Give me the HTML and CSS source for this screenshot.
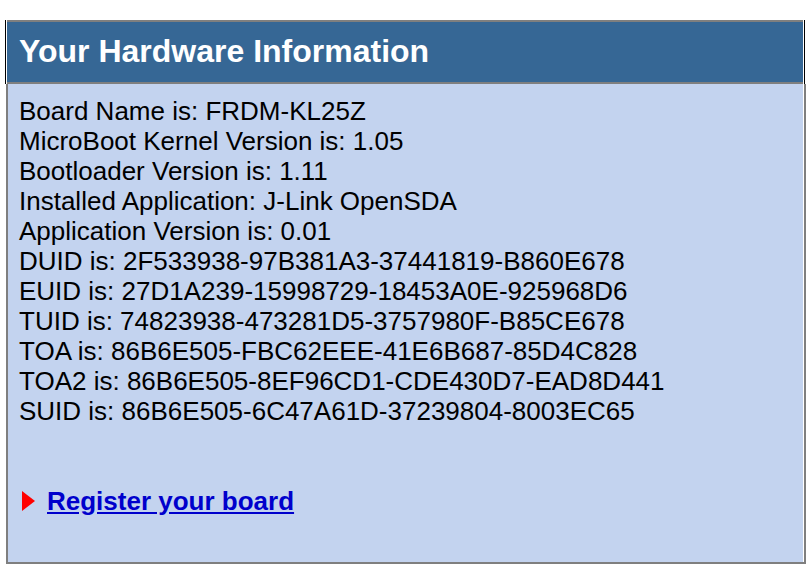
FILE: index.html
```html
<!DOCTYPE html>
<html>
<head>
<meta charset="utf-8">
<title>Your Hardware Information</title>
<link rel="stylesheet" href="styles.css">
</head>
<body>
<div class="panel">
  <div class="header">
    <div class="header-inner"><h1 class="title">Your Hardware Information</h1></div>
  </div>
  <div class="body">
    <div class="info">
      <div class="line">Board Name is: FRDM-KL25Z</div>
      <div class="line">MicroBoot Kernel Version is: 1.05</div>
      <div class="line">Bootloader Version is: 1.11</div>
      <div class="line">Installed Application: J-Link OpenSDA</div>
      <div class="line">Application Version is: 0.01</div>
      <div class="line">DUID is: 2F533938-97B381A3-37441819-B860E678</div>
      <div class="line">EUID is: 27D1A239-15998729-18453A0E-925968D6</div>
      <div class="line">TUID is: 74823938-473281D5-3757980F-B85CE678</div>
      <div class="line">TOA is: 86B6E505-FBC62EEE-41E6B687-85D4C828</div>
      <div class="line">TOA2 is: 86B6E505-8EF96CD1-CDE430D7-EAD8D441</div>
      <div class="line">SUID is: 86B6E505-6C47A61D-37239804-8003EC65</div>
    </div>
    <div class="register">
      <svg class="arrow" width="13" height="20" viewBox="0 0 13 20"><polygon points="0,0 13,10 0,20" fill="#f00"/></svg>
      <a class="reg-link" href="#">Register your board</a>
    </div>
  </div>
</div>
</body>
</html>
```
FILE: styles.css
```css
html, body {
  margin: 0;
  padding: 0;
  background: #fff;
}
body {
  font-family: "Liberation Sans", Arial, Helvetica, sans-serif;
}
.panel {
  margin: 20px 0 0 5px;
  width: 801px;
}
.header {
  width: 800px;
  box-sizing: border-box;
  border-left: 1px solid #000;
  border-right: 1px solid #000;
  padding: 0 1px;
  background: #fff;
  display: flex;
}
.header-inner {
  flex: 1;
  background: #366795;
  border-top: 2px solid #7f7f7f;
  border-bottom: 2px solid #7f7f7f;
  height: 60px;
  padding-left: 12px;
}
.title {
  margin: 0;
  color: #fff;
  font-size: 32px;
  font-weight: bold;
  line-height: 58px;
}
.body {
  margin-left: 1px;
  width: 800px;
  box-sizing: border-box;
  height: 480px;
  background: #c3d3ef;
  border-left: 2px solid #7f7f7f;
  border-right: 2px solid #7f7f7f;
  border-bottom: 2px solid #7f7f7f;
  box-shadow: inset -1px 0 0 #fff;
  padding: 12px 0 0 11px;
}
.line {
  font-size: 26px;
  line-height: 30px;
  color: #000;
}
.register {
  margin-top: 60px;
  display: flex;
  align-items: center;
  height: 30px;
}
.arrow {
  margin-left: 3px;
  margin-right: 12px;
}
.reg-link {
  font-size: 26px;
  font-weight: bold;
  line-height: 30px;
  color: #0000cc;
  text-decoration: underline;
}
```
